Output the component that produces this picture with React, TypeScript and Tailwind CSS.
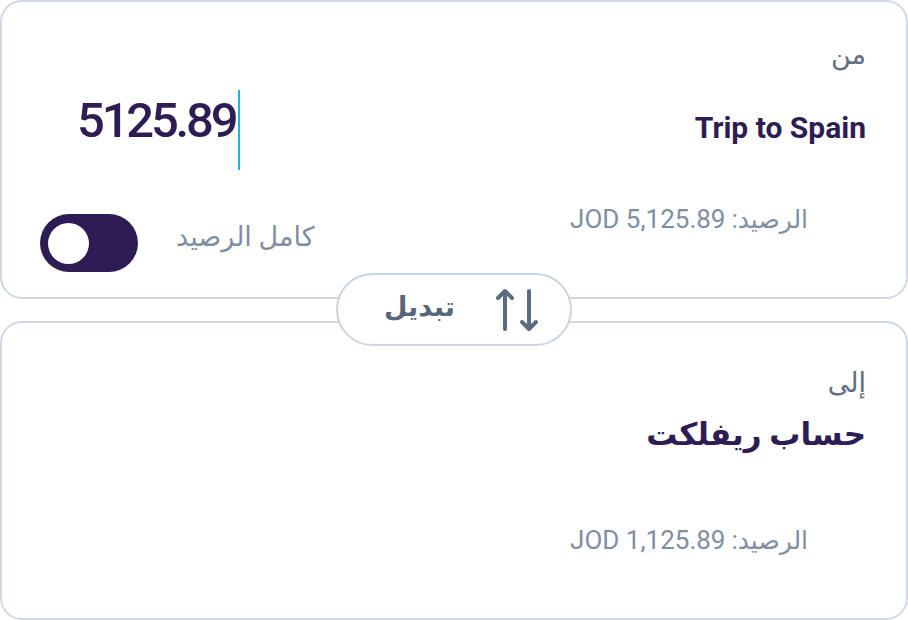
const font = "font-['Roboto','DejaVu_Sans',sans-serif]";

function Toggle() {
  return (
    <div className="w-[98px] h-[58px] rounded-full bg-[#2e1d55] flex items-center px-[8px]" dir="ltr">
      <div className="w-[41px] h-[41px] rounded-full bg-white" />
    </div>
  );
}

function SwapIcon() {
  return (
    <svg width="46" height="44" viewBox="0 0 46 44" fill="none" stroke="#5a6b7d" strokeWidth="4" strokeLinecap="round" strokeLinejoin="round">
      <path d="M10 41V3M3 10l7-7 7 7" />
      <path d="M34 3v38M27 34l7 7 7-7" />
    </svg>
  );
}

export default function App() {
  return (
    <div className={`relative w-[908px] h-[620px] bg-white ${font}`} dir="rtl">
      {/* from card */}
      <div className="h-[299px] border-2 border-[#cfd8e4] rounded-[22px] pt-[35px] pr-[40px] pl-[38px]">
        <div className="text-[27px] leading-[36px] text-[#5f6f80]">من</div>

        <div className="flex justify-between items-center mt-[17px] h-[80px]">
          <div className="text-[30px] font-bold text-[#2e1d55] -mt-[6px]" dir="ltr">Trip to Spain</div>
          <div className="flex items-center h-full pl-[37px]" dir="ltr">
            <span className="text-[49px] font-medium tracking-[-3.2px] text-[#2e1d55] leading-none pb-[20px]">5125.89</span>
            <span className="w-[2px] h-[80px] bg-[#1fb6d8] ml-[3px]" />
          </div>
        </div>

        <div className="flex justify-between items-start mt-[26px]">
          <div className="text-[25px] text-[#7f8ea0] pr-[58px] mt-[4px] whitespace-nowrap">
            الرصيد: <span dir="ltr" className="text-[26px]">JOD 5,125.89</span>
          </div>
          <div className="flex items-center gap-[38px] mt-[18px]">
            <span className="text-[27px] text-[#7f8ea0] -mt-[12px]">كامل الرصيد</span>
            <Toggle />
          </div>
        </div>
      </div>

      {/* to card */}
      <div className="h-[299px] mt-[22px] border-2 border-[#cfd8e4] rounded-[22px] pt-[42px] pr-[40px] pl-[38px]">
        <div className="text-[27px] leading-[36px] text-[#5f6f80]">إلى</div>
        <div className="text-[31px] font-bold text-[#2e1d55] mt-[14px] leading-[40px]">حساب ريفلكت</div>
        <div className="text-[25px] text-[#7f8ea0] pr-[58px] mt-[66px] whitespace-nowrap">
          الرصيد: <span dir="ltr" className="text-[26px]">JOD 1,125.89</span>
        </div>
      </div>

      {/* swap pill */}
      <div className="absolute left-[336px] top-[273px] w-[236px] h-[73px] rounded-full border-2 border-[#c9d5e3] bg-white flex items-center pr-[29px] gap-[40px]">
        <SwapIcon />
        <span className="text-[27px] font-bold text-[#566778] -mt-[4px]">تبديل</span>
      </div>
    </div>
  );
}
